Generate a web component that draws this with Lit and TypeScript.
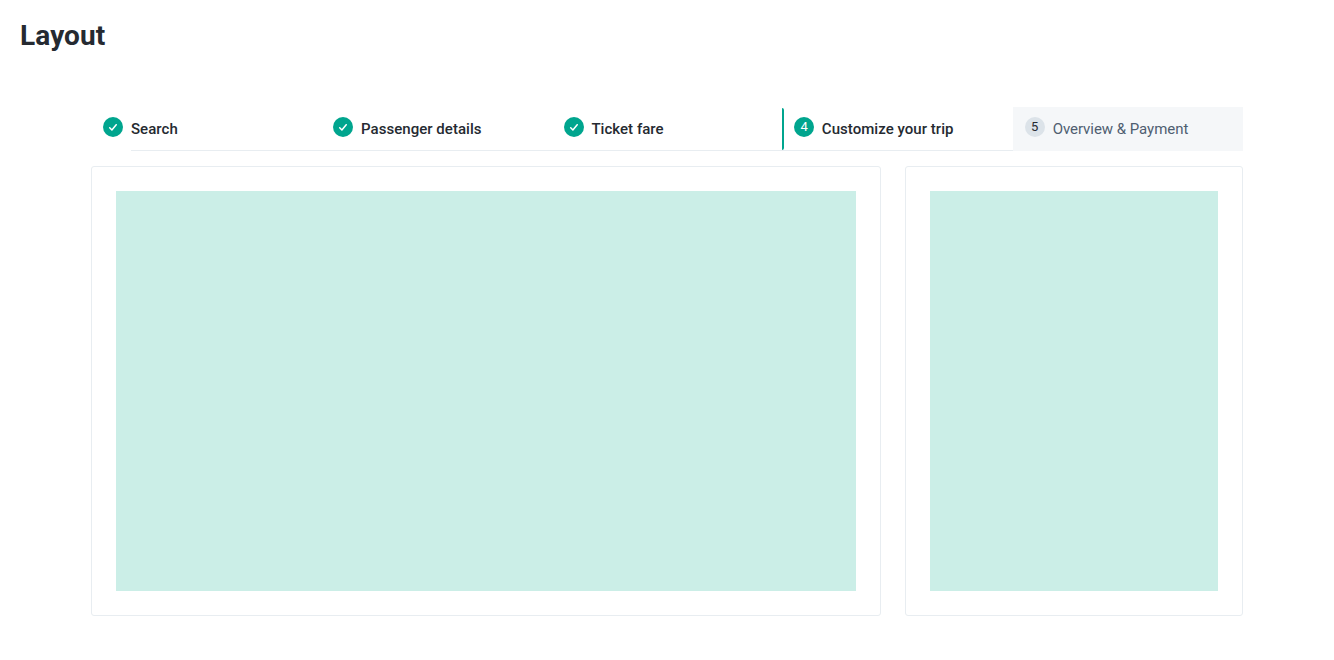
import { LitElement, html, css, svg } from "lit";
import { customElement, property } from "lit/decorators.js";
import { classMap } from "lit/directives/class-map.js";

type Status = "done" | "active" | "disabled";

@customElement("wizard-step")
class WizardStep extends LitElement {
  @property() label = "";
  @property() status: Status = "done";
  @property({ type: Number }) index = 1;

  static styles = css`
    :host { display: block; flex: 1 1 0; min-width: 0; }
    .step { display: flex; height: 44px; position: relative; padding-left: 12px; box-sizing: border-box; }
    .badge {
      flex: none; width: 20px; height: 20px; margin-top: 10px; border-radius: 50%;
      background: #00a58e; color: #fff; display: flex; align-items: center;
      justify-content: center; font-size: 13px; line-height: 20px;
    }
    .label {
      flex: 1; margin-left: 8px; padding-top: 12px; line-height: 20px; font-size: 15px;
      font-weight: 500; letter-spacing: 0.04px; color: #252a31; white-space: nowrap;
      border-bottom: 1px solid #e8edf1;
    }
    .follow { background: linear-gradient(#e8edf1, #e8edf1) left bottom / 100% 1px no-repeat; }
    .follow .label { margin-left: 7.6px; }
    .disabled { background: #f5f7f9; }
    .disabled .label { color: #4f5e71; font-weight: 400; letter-spacing: -0.04px; border-bottom-color: transparent; }
    .disabled .badge { background: #dce3e9; color: #252a31; }
    .bar {
      position: absolute; left: 0; top: 1px; width: 2px; height: 42px;
      background: #00a58e; border-radius: 0 2px 2px 0;
    }
    svg { display: block; }
  `;

  render() {
    const disabled = this.status === "disabled";
    const check = svg`<path d="M4.7 8.8 L6.9 11 L11.2 5.7" fill="none" stroke="#fff" stroke-width="1.5" stroke-linecap="round" stroke-linejoin="round" />`;
    return html`
      <div class=${classMap({ step: true, follow: this.index > 1 && !disabled, disabled })}>
        ${this.status === "active" ? html`<span class="bar"></span>` : ""}
        <span class="badge">
          ${this.status === "done"
            ? html`<svg width="16" height="16" viewBox="0 0 16 16">${check}</svg>`
            : this.index}
        </span>
        <span class="label">${this.label}</span>
      </div>
    `;
  }
}

@customElement("app-root")
class AppRoot extends LitElement {
  private steps: { label: string; status: Status }[] = [
    { label: "Search", status: "done" },
    { label: "Passenger details", status: "done" },
    { label: "Ticket fare", status: "done" },
    { label: "Customize your trip", status: "active" },
    { label: "Overview & Payment", status: "disabled" },
  ];

  static styles = css`
    :host {
      display: block; box-sizing: border-box; height: 660px; padding: 20px; background: #fff;
      font-family: Roboto, sans-serif; color: #252a31;
    }
    h1 { margin: 0; font-size: 28px; line-height: 32px; font-weight: 700; letter-spacing: 0.1px; }
    main { width: 1152px; margin: 55px 0 0 71px; }
    .steps { display: flex; }
    .columns { display: grid; grid-template-columns: 790px 338px; gap: 24px; margin-top: 15px; }
    .card { box-sizing: border-box; height: 450px; padding: 24px; border: 1px solid #e8edf1; border-radius: 3px; }
    .block { height: 400px; background: #cbeee7; }
  `;

  render() {
    return html`
      <h1>Layout</h1>
      <main>
        <nav class="steps">
          ${this.steps.map((s, i) => html`<wizard-step .label=${s.label} .status=${s.status} .index=${i + 1}></wizard-step>`)}
        </nav>
        <div class="columns">
          <section class="card"><div class="block"></div></section>
          <section class="card"><div class="block"></div></section>
        </div>
      </main>
    `;
  }
}
